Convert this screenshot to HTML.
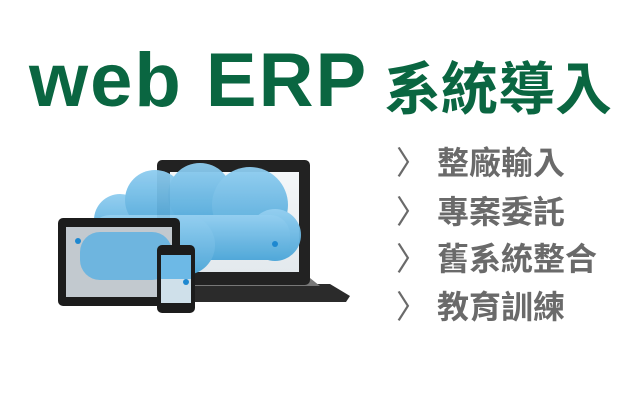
<!DOCTYPE html>
<html><head><meta charset="utf-8"><style>
body{margin:0;width:630px;height:420px;background:#fff;position:relative;overflow:hidden;font-family:"Liberation Sans","Noto Sans CJK TC",sans-serif}
.t1{position:absolute;left:29px;top:36px;font-size:76px;font-weight:bold;color:#0a6641;line-height:90px;letter-spacing:2px}
.t2{position:absolute;left:384px;top:50px;font-size:57px;font-weight:bold;color:#0a6641;line-height:70px;font-family:"Noto Sans CJK TC",sans-serif}
.li{position:absolute;left:396px;font-size:32px;font-weight:bold;color:#6a6a6a;line-height:40px;font-family:"Noto Sans CJK TC",sans-serif;white-space:nowrap}
.li span{display:inline-block;width:41px;font-weight:normal}
</style></head><body>
<div class="t1">web ERP</div>
<div class="t2">系統導入</div>
<div class="li" style="top:141px"><span>〉</span>整廠輸入</div>
<div class="li" style="top:190px"><span>〉</span>專案委託</div>
<div class="li" style="top:237px"><span>〉</span>舊系統整合</div>
<div class="li" style="top:285px"><span>〉</span>教育訓練</div>
<svg style="position:absolute;left:0;top:0" width="630" height="420">
<defs><linearGradient id="c" x1="0" y1="0" x2="0" y2="1"><stop offset="0" stop-color="#8fcdf0"/><stop offset="1" stop-color="#4aa5d8"/></linearGradient>
<linearGradient id="s" x1="0" y1="0" x2="0" y2="1"><stop offset="0" stop-color="#f4f7f9"/><stop offset="1" stop-color="#e3e9ed"/></linearGradient></defs>
<path d="M146 284 L330 284 L350 296 L346 302 L160 302 L140 296Z" fill="#2b2b2b"/>
<path d="M176 270 L300 270 L320 286 L160 286Z" fill="#777"/>
<rect x="157" y="160" width="153" height="125" rx="5" fill="#222"/>
<rect x="170" y="172" width="129" height="100" fill="url(#s)"/>
<g fill="url(#c)" opacity="0.95">
<circle cx="120" cy="220" r="26"/><circle cx="155" cy="200" r="30"/><circle cx="200" cy="195" r="32"/><circle cx="250" cy="205" r="38"/><circle cx="275" cy="235" r="26"/>
<rect x="90" y="215" width="200" height="45" rx="20"/><circle cx="185" cy="245" r="30"/>
</g>
<circle cx="275" cy="244" r="3" fill="#1e88d0"/>
<rect x="58" y="218" width="122" height="88" rx="5" fill="#1c1c1c"/>
<rect x="66" y="227" width="106" height="70" fill="#dfe8ee" opacity="0.85"/>
<g fill="#5fb2e2" opacity="0.85"><rect x="80" y="232" width="92" height="48" rx="20"/></g>
<circle cx="78" cy="241" r="3" fill="#1e88d0"/>
<rect x="157" y="245" width="38" height="68" rx="5" fill="#1c1c1c"/>
<rect x="161" y="255" width="30" height="48" fill="#cfe0ea"/>
<rect x="161" y="255" width="30" height="24" fill="#6db9e6"/>
<circle cx="186" cy="282" r="3" fill="#1e88d0"/>
</svg>
</body></html>
